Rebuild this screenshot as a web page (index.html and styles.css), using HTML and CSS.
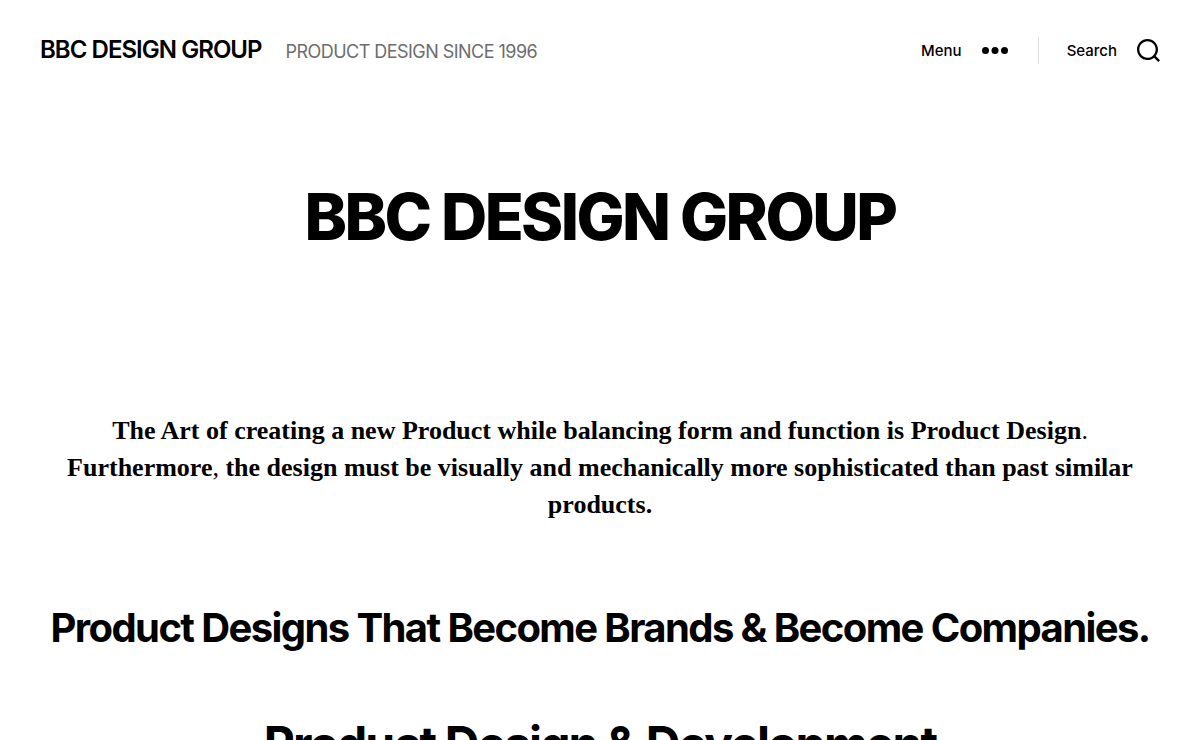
FILE: index.html
```html
<!DOCTYPE html>
<html lang="en">
<head>
<meta charset="utf-8">
<meta name="viewport" content="width=device-width, initial-scale=1">
<title>BBC Design Group</title>
<link rel="stylesheet" href="styles.css">
</head>
<body>
<header class="site-header">
  <div class="branding">
    <a class="site-title" href="#">BBC DESIGN GROUP</a>
    <div class="tagline">PRODUCT DESIGN SINCE 1996</div>
  </div>
  <div class="toggles">
    <button class="toggle" type="button">
      <span>Menu</span>
      <svg class="dots" viewBox="0 0 26 7" width="26" height="7" aria-hidden="true"><circle cx="3.5" cy="3.5" r="3.5"/><circle cx="13" cy="3.5" r="3.5"/><circle cx="22.5" cy="3.5" r="3.5"/></svg>
    </button>
    <button class="toggle toggle-search" type="button">
      <span>Search</span>
      <svg viewBox="0 0 23 23" width="23" height="23" aria-hidden="true"><path fill="currentColor" d="M38.710696,48.0601792 L43,52.3494831 L41.3494831,54 L37.0601792,49.710696 C35.2632422,51.1481185 32.9839107,52.0076499 30.5038249,52.0076499 C24.7027226,52.0076499 20,47.3049272 20,41.5038249 C20,35.7027226 24.7027226,31 30.5038249,31 C36.3049272,31 41.0076499,35.7027226 41.0076499,41.5038249 C41.0076499,43.9839107 40.1481185,46.2632422 38.710696,48.0601792 Z M36.3875844,47.1716785 C37.8030221,45.7026647 38.6734666,43.7048964 38.6734666,41.5038249 C38.6734666,36.9918565 35.0157934,33.3341833 30.5038249,33.3341833 C25.9918565,33.3341833 22.3341833,36.9918565 22.3341833,41.5038249 C22.3341833,46.0157934 25.9918565,49.6734666 30.5038249,49.6734666 C32.7048964,49.6734666 34.7026647,48.8030221 36.1716785,47.3875844 C36.2023931,47.347638 36.2360451,47.3092237 36.2726343,47.2726343 C36.3092237,47.2360451 36.347638,47.2023931 36.3875844,47.1716785 Z" transform="translate(-20 -31)"/></svg>
    </button>
  </div>
</header>
<main>
  <h1 class="entry-title">BBC DESIGN GROUP</h1>
  <div class="entry-content">
    <p class="intro"><strong>The Art of creating a new Product while balancing form and function is Product Design</strong>. <strong>Furthermore</strong>, <strong>the design must be visually and mechanically more sophisticated than past similar products.</strong></p>
    <h3 class="slogan">Product Designs That Become Brands &amp; Become Companies.</h3>
    <h2 class="section-title">Product Design &amp; Development</h2>
  </div>
</main>
</body>
</html>
```
FILE: styles.css
```css
* {
  box-sizing: border-box;
}

body {
  margin: 0;
  background: #fff;
  color: #000;
  font-family: Inter, sans-serif;
}

.site-header {
  display: flex;
  align-items: center;
  justify-content: space-between;
  padding: 28px 40px;
}

.branding {
  display: flex;
  align-items: baseline;
  gap: 24px;
}

.site-title {
  color: inherit;
  font-size: 24px;
  font-weight: 600;
  line-height: 44px;
  text-decoration: none;
  letter-spacing: -0.04em;
}

.tagline {
  color: #6d6d6d;
  font-size: 18px;
  letter-spacing: -0.03em;
}

.toggles {
  display: flex;
  align-items: center;
}

.toggle {
  display: flex;
  align-items: center;
  gap: 20px;
  padding: 0;
  border: 0;
  background: none;
  color: inherit;
  font: 500 15px/27px Inter, sans-serif;
}

.toggle-search {
  margin-left: 30px;
  padding-left: 28px;
  border-left: 1px solid #dcdcdc;
}

.entry-title {
  margin: 0;
  padding: 80px 40px 124px;
  font-size: 64px;
  font-weight: 800;
  line-height: 74px;
  letter-spacing: -0.04em;
  text-align: center;
}

.entry-content {
  padding: 34px 40px;
  text-align: center;
}

.intro {
  margin: 0;
  font: 26px/37px "Liberation Serif", serif;
}

.slogan {
  margin: 80px 0 0;
  font-size: 40px;
  font-weight: 700;
  line-height: 50px;
  letter-spacing: -0.04em;
}

.section-title {
  margin: 64px 0 0;
  font-size: 48px;
  font-weight: 700;
  line-height: 54px;
  letter-spacing: -0.04em;
}
```
